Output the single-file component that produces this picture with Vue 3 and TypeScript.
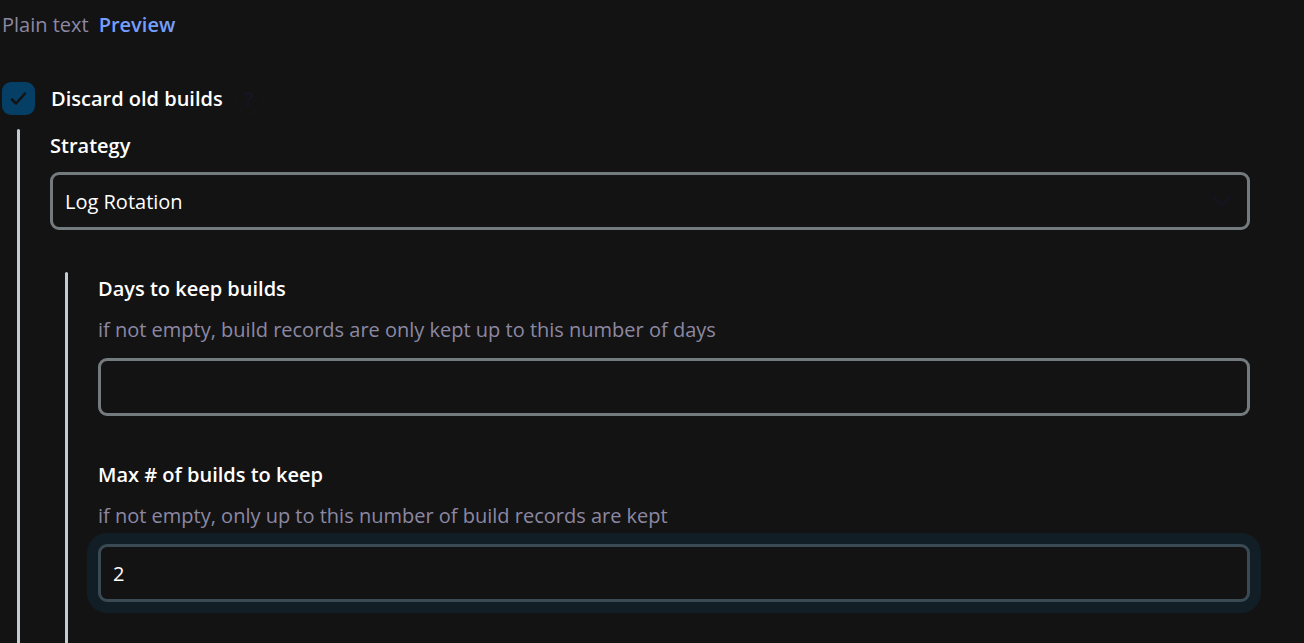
<script setup lang="ts">
import { ref } from 'vue'

interface Field {
  id: string
  label: string
  hint: string
  value: string
  active: boolean
}

const discard = ref(true)
const strategy = ref('Log Rotation')
const fields = ref<Field[]>([
  {
    id: 'days-to-keep',
    label: 'Days to keep builds',
    hint: 'if not empty, build records are only kept up to this number of days',
    value: '',
    active: false,
  },
  {
    id: 'max-builds',
    label: 'Max # of builds to keep',
    hint: 'if not empty, only up to this number of build records are kept',
    value: '2',
    active: true,
  },
])
</script>

<template>
  <main class="config">
    <div class="formatter">
      <span>Plain text</span>
      <a class="preview" href="#preview">Preview</a>
    </div>

    <div class="option">
      <span class="check">
        <input id="discard" v-model="discard" type="checkbox" class="check-input" />
        <svg v-if="discard" class="check-mark" viewBox="0 0 33 33" aria-hidden="true">
          <path d="M10 17.5l4 4L23 11.500" />
        </svg>
      </span>
      <label for="discard" class="label option-label">Discard old builds</label>
      <button type="button" class="help" aria-label="Help">?</button>
    </div>

    <section v-if="discard" class="nested outer">
      <label for="strategy" class="label strategy-label">Strategy</label>
      <div class="select-wrap">
        <select id="strategy" v-model="strategy" class="control select">
          <option>Log Rotation</option>
        </select>
        <svg class="chevron" viewBox="0 0 18 10" aria-hidden="true">
          <path d="M1 1l8 8 8-8" />
        </svg>
      </div>

      <div class="nested inner">
        <div v-for="field in fields" :key="field.id" class="field">
          <label :for="field.id" class="label">{{ field.label }}</label>
          <p :id="field.id + '-hint'" class="hint">{{ field.hint }}</p>
          <input
            :id="field.id"
            v-model="field.value"
            type="text"
            class="control"
            :class="{ active: field.active }"
            :aria-describedby="field.id + '-hint'"
          />
        </div>
      </div>
    </section>
  </main>
</template>

<style>
html,
body {
  background: #131313;
}
</style>

<style scoped>
.config {
  box-sizing: border-box;
  display: flex;
  flex-direction: column;
  min-height: 100vh;
  padding: 10px 54px 0 2px;
  background: #131313;
  color: #fff;
  font-family: "Segoe UI", "Open Sans", "Noto Sans", sans-serif;
  font-size: 20px;
  line-height: 30px;
}

.formatter {
  display: flex;
  gap: 10px;
  color: #8c88a3;
}

.preview {
  color: #759fff;
  font-weight: 600;
  text-decoration: none;
}

.option {
  display: flex;
  align-items: center;
  margin-top: 42px;
}

.check {
  position: relative;
  width: 33px;
  height: 33px;
}

.check-input {
  appearance: none;
  display: block;
  width: 33px;
  height: 33px;
  margin: 0;
  border-radius: 9px;
  background: #053f66;
}

.check-mark {
  position: absolute;
  inset: 0;
  fill: none;
  stroke: #131313;
  stroke-width: 2.5;
  stroke-linecap: round;
  stroke-linejoin: round;
  pointer-events: none;
}

.label {
  display: block;
  font-weight: 600;
}

.option-label {
  margin-left: 16px;
}

.help {
  width: 30px;
  height: 30px;
  margin-left: 11px;
  padding: 0;
  border: 1px solid #161519;
  border-radius: 50%;
  background: transparent;
  color: #171424;
  font: inherit;
  font-size: 20px;
  font-weight: 700;
  line-height: 28px;
}

.nested {
  position: relative;
  flex: 1;
  padding-left: 33px;
}

.nested::before {
  content: "";
  position: absolute;
  top: 0;
  bottom: 0;
  left: 0;
  width: 3px;
  border-radius: 2px 2px 0 0;
  background: #c3cdd1;
}

.outer {
  display: flex;
  flex-direction: column;
  margin: 14px 0 0 15px;
}

.inner {
  margin: 42px 0 0 15px;
}

.strategy-label {
  margin: 2px 0 11px;
}

.select-wrap {
  position: relative;
}

.control {
  appearance: none;
  box-sizing: border-box;
  display: block;
  width: 100%;
  height: 58px;
  margin: 0;
  padding: 0 12px;
  border: 3px solid #747b7f;
  border-radius: 9px;
  outline: none;
  background: #131313;
  color: #fff;
  font: inherit;
}

.select {
  padding-top: 2px;
}

.control.active {
  border-color: #3a4a54;
  box-shadow: 0 0 0 11px #121e25;
}

.chevron {
  position: absolute;
  top: 24px;
  right: 19px;
  width: 18px;
  height: 10px;
  fill: none;
  stroke: #171424;
  stroke-width: 2;
  stroke-linecap: round;
  stroke-linejoin: round;
  pointer-events: none;
}

.field {
  padding-top: 2px;
}

.field + .field {
  margin-top: 42px;
}

.hint {
  margin: 11px 0 13px;
  color: #8c88a3;
}
</style>
